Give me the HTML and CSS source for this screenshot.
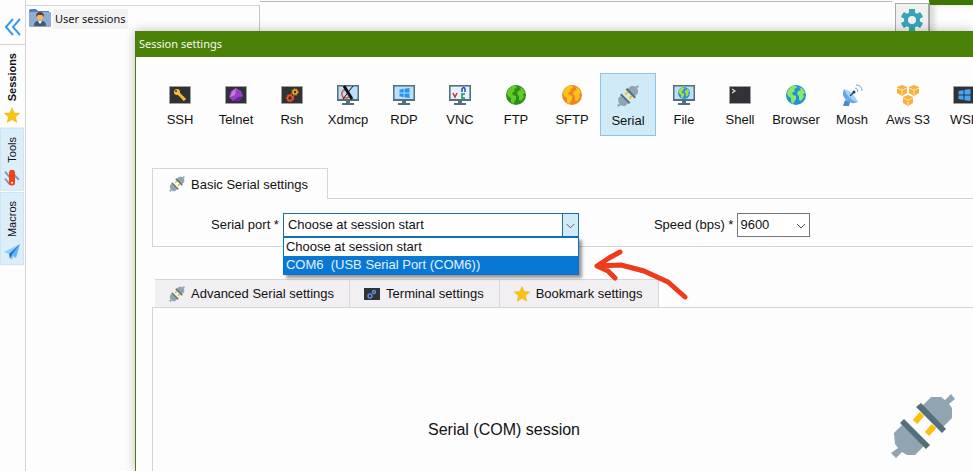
FILE: index.html
```html
<!DOCTYPE html>
<html lang="en">
  <head>
    <meta charset="UTF-8" />
    <meta name="viewport" content="width=device-width, initial-scale=1.0" />
    <title>Session settings</title>
    <link rel="stylesheet" href="styles.css">
  </head>
  <body>
    <!-- shared icons -->
    <svg class="sprite" aria-hidden="true">
      <symbol id="plug" viewBox="0 0 64 64">
        <path fill="#90a4b2" d="M31 12 40 3H50L54 6 60 0 64 5 58 10 61 14V24L52 33ZM11 31 3 39 4 50 7 54 0 59 5 64 11 58 16 61H24L33 52Z" />
        <path stroke="#fcc008" stroke-width="6" d="M31 20 24 28M43 32 36 40" />
        <path fill="#546e7a" d="M30 9 55 35 51 39 25 13ZM13 25 39 51 35 55 9 29Z" />
      </symbol>
      <symbol id="star" viewBox="0 0 16 16">
        <path fill="#f7c410" stroke="#e8b010" stroke-width=".5" d="M8 .5 10.2 5.6 15.7 6 11.5 9.7 12.8 15.2 8 12.3 3.2 15.2 4.5 9.7.3 6 5.8 5.6Z" />
      </symbol>
      <symbol id="screen" viewBox="0 0 22 20">
        <path fill="#546e7a" d="M0 0H22V16H13V18H17V20H5V18H9V16H0Z" />
        <path fill="#bbdefb" d="M1.5 1.5H20.5V14H1.5Z" />
      </symbol>
      <symbol id="box" viewBox="0 0 22 18">
        <path fill="#303236" stroke="#a0a0a0" d="M.5.5H21.5V17.5H.5Z" />
      </symbol>
      <symbol id="windows" viewBox="0 0 12 12">
        <path d="M0 2 5 1V5.5H0ZM6 .8 12 0V5.5H6ZM0 6.5H5V11L0 10ZM6 6.5H12V12L6 11.2Z" />
      </symbol>
      <symbol id="land" viewBox="0 0 20 20">
        <path d="M2 5 6 1 10 .5 11 3 8 4 9 6 6 8 7 10 10 11 10 14 7 19 5 17 5 13 2 11 1 8ZM13 2 17 4 19 8 17 9 18 12 15 16 13 15 13 11 11 9 12 6 15 5Z" />
      </symbol>
    </svg>

    <aside class="side">
      <button class="collapse" aria-label="Collapse">
        <svg width="16" height="18" viewBox="0 0 16 18"><path fill="none" stroke="#3f9bdc" stroke-width="2" d="M8 1 1 9 8 17M15 1 8 9 15 17" /></svg>
      </button>
      <button class="side-tab active"><svg class="icon"><use href="#star" /></svg>Sessions</button>
      <button class="side-tab">
        <svg class="icon" viewBox="0 0 16 16"><path stroke="#8f93b8" stroke-width="2" d="M1 2 6 8M10 5 15 10M1 9 6 15" /><rect x="5" y="0" width="6" height="16" rx="3" fill="#ee4416" /><circle cx="8" cy="13" r="1" fill="#fff" /></svg>Tools
      </button>
      <button class="side-tab">
        <svg class="icon" viewBox="0 0 16 16"><path fill="#90caf9" d="M16 0 0 8 5 10 8 16Z" /><path fill="#1976d2" d="M16 0 5 10 6 15 8 11Z" /><path fill="#64b5f6" d="M16 0 8 11 12 14Z" /></svg>Macros
      </button>
    </aside>

    <main class="workspace">
      <section class="tree">
        <svg width="22" height="18" viewBox="0 0 22 18"><path fill="#4d7fbd" d="M0 2Q0 0 2 0H7L9 2H20V6H0Z" /><rect y="3" width="22" height="15" rx="1" fill="#90acd4" /><path fill="#455a64" d="M5 17Q5 12 9 12H13Q17 12 17 17Z" /><path fill="#fff" d="M9 12H13L11 15Z" /><circle cx="11" cy="8" r="3" fill="#ffb74d" /><path fill="#5d4037" d="M7 8Q7 3 11 3T15 8L13 6H9Z" /></svg>
        <span class="tree-label">User sessions</span>
      </section>
      <section class="terminal"></section>
      <button class="gear" aria-label="Settings">
        <svg width="22" height="22" viewBox="-11 -11 22 22"><g fill="#36a3b8"><path id="tooth" d="M-3-11H3L2 11H-2Z" /><use href="#tooth" transform="rotate(60)" /><use href="#tooth" transform="rotate(120)" /><use href="#tooth" transform="rotate(180)" /><use href="#tooth" transform="rotate(240)" /><use href="#tooth" transform="rotate(300)" /><circle r="8" /></g><circle r="4" fill="#f0f0f0" /></svg>
      </button>
      <div class="behind"></div>
    </main>

    <section class="dialog" role="dialog" aria-labelledby="title">
      <h1 class="title" id="title">Session settings</h1>

      <nav class="types">
        <button class="type">
          <svg width="22" height="20" viewBox="0 0 22 20"><use href="#box" y="1" width="22" height="18" /><circle cx="8" cy="7" r="3" fill="#fbc02d" /><circle cx="7" cy="6" r="1" fill="#303236" /><path stroke="#fbc02d" stroke-width="3" d="M9 8 16 15" /><path stroke="#e09a20" stroke-width="1" d="M11 11 15 16" /></svg>SSH
        </button>
        <button class="type">
          <svg width="22" height="20" viewBox="0 0 22 20"><use href="#box" y="1" width="22" height="18" /><path fill="#9c3fc4" d="M11 3 16 6 18 11 14 16H8L4 12 6 6Z" /><path fill="#ca7be0" d="M11 3 7 7 5 12 10 10Z" /><path fill="#7120a0" d="M18 11 14 16H8L13 12Z" /></svg>Telnet
        </button>
        <button class="type">
          <svg width="22" height="20" viewBox="0 0 22 20"><use href="#box" y="1" width="22" height="18" /><g fill="none"><circle cx="9" cy="13" r="2.5" stroke="#f4511e" stroke-width="1.5" /><circle cx="9" cy="13" r="3.8" stroke="#f4511e" stroke-dasharray="2 1.5" /><circle cx="14" cy="7" r="2" stroke="#ffa726" stroke-width="1.5" /><circle cx="14" cy="7" r="3.2" stroke="#ffa726" stroke-dasharray="1.5 1.2" /></g></svg>Rsh
        </button>
        <button class="type">
          <svg width="22" height="20" viewBox="0 0 22 20"><use href="#screen" /><path fill="none" stroke="#e0583c" stroke-width="1.5" d="M10 4Q4 5 5 10T12 12" /><path stroke="#111" stroke-width="3" d="M7 1 15 14" /><path stroke="#111" d="M16 1 6 14" /></svg>Xdmcp
        </button>
        <button class="type">
          <svg width="22" height="20" viewBox="0 0 22 20"><use href="#screen" /><use href="#windows" x="6" y="3" width="11" height="10" fill="#2196f3" /></svg>RDP
        </button>
        <button class="type">
          <svg width="22" height="20" viewBox="0 0 22 20"><use href="#screen" /><path fill="#e3f2fd" d="M2 2H20V14H2Z" /><g fill="none" stroke-width="1.5"><path stroke="#d32f2f" d="M4 8 6 12 8 8" /><path stroke="#3040c0" d="M13 7V4Q15 1 16 4V7" /><path stroke="#159447" d="M16 9H13V13H16" /></g></svg>VNC
        </button>
        <button class="type">
          <svg width="20" height="20" viewBox="0 0 20 20"><circle cx="10" cy="10" r="10" fill="#2e8b20" /><use href="#land" fill="#62cc22" /></svg>FTP
        </button>
        <button class="type">
          <svg width="20" height="20" viewBox="0 0 20 20"><circle cx="10" cy="10" r="10" fill="#f58220" /><use href="#land" fill="#fbc51b" /></svg>SFTP
        </button>
        <button class="type selected">
          <svg width="22" height="22"><use href="#plug" /></svg>Serial
        </button>
        <button class="type">
          <svg width="22" height="20" viewBox="0 0 22 20"><use href="#screen" /><circle cx="11" cy="8" r="6" fill="#2196dc" /><use href="#land" x="5" y="2" width="12" height="12" fill="#b2d83c" /></svg>File
        </button>
        <button class="type">
          <svg width="22" height="20" viewBox="0 0 22 20"><use href="#box" y="1" width="22" height="18" /><path fill="none" stroke="#e0e0e0" stroke-width="1.2" d="M3 4 6 6 3 8" /></svg>Shell
        </button>
        <button class="type">
          <svg width="20" height="20" viewBox="0 0 20 20"><circle cx="10" cy="10" r="10" fill="#2190dc" /><use href="#land" fill="#8ce860" /></svg>Browser
        </button>
        <button class="type">
          <svg width="22" height="22" viewBox="0 0 22 22"><path fill="#64a9e4" d="M3 5Q0 11 5 16T17 18Z" /><path fill="#a6d4f8" d="M3 5Q11 6 17 18 8 17 3 5Z" /><path stroke="#1c4f80" stroke-width="1.5" d="M9 12 13 8" /><circle cx="13" cy="8" r="1.5" fill="#173f66" /><path fill="#4a8dcc" d="M4 16 2 22H8L9 18Z" /><path fill="none" stroke="#7aa7cc" d="M14 4Q17 4 17 8M15 1Q21 1 21 7" /></svg>Mosh
        </button>
        <button class="type">
          <svg width="24" height="22" viewBox="0 0 24 22"><g id="cube"><path fill="#f9b03c" d="M6 1 11 3V9L6 12 1 9V3Z" /><path fill="none" stroke="#fde3b4" d="M1 4 6 6 11 4M6 6V11" /></g><use href="#cube" x="12" /><use href="#cube" x="6" y="10" /></svg>Aws S3
        </button>
        <button class="type">
          <svg width="22" height="20" viewBox="0 0 22 20"><use href="#box" y="1" width="22" height="18" /><use href="#windows" x="5" y="4" width="13" height="12" fill="#42a5f5" /></svg>WSL
        </button>
      </nav>

      <div class="tabs">
        <button class="tab current"><svg class="icon"><use href="#plug" /></svg>Basic Serial settings</button>
      </div>
      <form class="basic">
        <label for="port">Serial port *</label>
        <div class="combo port">
          <select id="port"><option>Choose at session start</option><option>COM6  (USB Serial Port (COM6))</option></select>
          <svg class="arrow" width="16" height="22" viewBox="0 0 16 22"><path d="M4 10 8 14 12 10" /></svg>
          <ul class="list">
            <li>Choose at session start</li>
            <li class="picked">COM6&nbsp; (USB Serial Port (COM6))</li>
          </ul>
        </div>
        <label class="speed-label" for="speed">Speed (bps) *</label>
        <div class="combo speed">
          <select id="speed"><option>9600</option></select>
          <svg class="arrow" width="16" height="22" viewBox="0 0 16 22"><path d="M4 10 8 14 12 10" /></svg>
        </div>
      </form>

      <div class="tabs more">
        <button class="tab"><svg class="icon"><use href="#plug" /></svg>Advanced Serial settings</button>
        <button class="tab"><svg class="icon" viewBox="0 0 16 16"><path fill="#303236" d="M0 2H16V14H0Z" /><g fill="none" stroke="#5b8dd8" stroke-width="1.5"><circle cx="6" cy="10" r="2" /><circle cx="10" cy="6" r="1.5" /></g></svg>Terminal settings</button>
        <button class="tab"><svg class="icon"><use href="#star" /></svg>Bookmark settings</button>
      </div>
      <div class="summary">
        <p class="summary-text">Serial (COM) session</p>
        <svg width="64" height="64"><use href="#plug" /></svg>
      </div>
    </section>

    <!-- hand drawn pointer -->
    <svg class="pointer" width="100" height="54" viewBox="0 0 100 54" aria-hidden="true">
      <path d="M28 5 17 11 5 19 16 24 23 31M5 19 29 18 52 24 76 35 93 50" />
    </svg>
  </body>
</html>
```

FILE: styles.css
```css
* {
  box-sizing: border-box;
}
body {
  margin: 0;
  min-height: 100vh;
  display: flex;
  position: relative;
  overflow: hidden;
  background-color: #fdfdfd;
  color: #111;
  font-family: "Liberation Sans", Arial, sans-serif;
  font-size: 13px;
}
button,
select {
  font: inherit;
  color: inherit;
  border: none;
  border-radius: 0;
  background: none;
  padding: 0;
  margin: 0;
}
svg {
  flex: none;
}
.sprite {
  position: absolute;
  width: 0;
  height: 0;
}
.icon {
  width: 16px;
  height: 16px;
}

/* left strip */
.side {
  width: 26px;
  flex: none;
  padding-top: 4px;
  border-right: 1px solid #d4d4d4;
}
.collapse {
  display: flex;
  align-items: center;
  justify-content: center;
  width: 100%;
  height: 41px;
  padding-top: 6px;
  border-bottom: 1px solid #d4d4d4;
}
.side-tab {
  display: flex;
  align-items: center;
  gap: 7px;
  writing-mode: vertical-rl;
  transform: rotate(180deg);
  width: 24px;
  padding: 4px 0 8px;
  margin-bottom: 1px;
  font-size: 11px;
  background-color: #dceefa;
  border: 1px solid #cde4f2;
}
.side-tab .icon {
  transform: rotate(180deg);
}
.side-tab.active {
  gap: 6px;
  padding: 3px 0 7px;
  background: none;
  border-color: transparent;
  font-weight: bold;
}

/* main window behind the dialog */
.workspace {
  flex: 1;
  display: flex;
}
.tree {
  width: 234px;
  margin-top: 5px;
  padding: 3px;
  display: flex;
  align-items: flex-start;
  gap: 2px;
  border-top: 1px solid #d4d4d4;
  border-right: 1px solid #c4c4c4;
}
.tree-label {
  padding: 0 2px;
  background-color: #f3f2f3;
  font-family: "Noto Sans", sans-serif;
  font-size: 11px;
  line-height: 20px;
  white-space: nowrap;
}
.terminal {
  flex: 1;
  margin: 1px 3px 0 0;
  border-top: 1px solid #b8b8b8;
}
.gear {
  width: 34px;
  height: 36px;
  margin-top: 3px;
  border: 1px solid #aaa;
  background-color: #f0f0f0;
}
.behind {
  width: 44px;
  border-top: 5px solid #3f7304;
  border-left: 1px solid #999;
  box-shadow: inset 5px 0 5px #ddd;
}

/* dialog */
.dialog {
  position: absolute;
  top: 31px;
  left: 135px;
  right: 0;
  bottom: 0;
  display: flex;
  flex-direction: column;
  overflow: hidden;
  background-color: #fdfdfd;
  border-left: 1px solid #4a8005;
  box-shadow: 0 0 10px rgba(0, 0, 0, 0.25);
}
.title {
  flex: none;
  margin: 0;
  padding-left: 3px;
  background-color: #4a8208;
  color: #f4f8ee;
  font-family: "Noto Sans", sans-serif;
  font-size: 11px;
  font-weight: normal;
  line-height: 26px;
}
.types {
  display: flex;
  padding: 16px 0 32px 16px;
}
.type {
  flex: none;
  width: 56px;
  height: 63px;
  padding-top: 2px;
  display: flex;
  flex-direction: column;
  align-items: center;
  justify-content: center;
  gap: 6px;
  white-space: nowrap;
}
.type svg {
  height: 22px;
}
.type.selected {
  padding-top: 4px;
  background-color: #d0eaf8;
  border: 1px solid #90c4e4;
}
.tabs {
  display: flex;
  margin-left: 16px;
}
.tab {
  display: flex;
  align-items: center;
  gap: 6px;
  height: 28px;
  padding: 0 15px 0 14px;
  background-color: #f1eff1;
  border: 1px solid #d8d6d8;
  border-width: 1px 1px 0 0;
  white-space: nowrap;
}
.tab.current {
  height: 31px;
  margin-bottom: -1px;
  padding: 0 19px 0 16px;
  background-color: #fdfdfd;
  border-left-width: 1px;
  z-index: 1;
}
.basic {
  display: flex;
  align-items: center;
  height: 49px;
  margin-left: 16px;
  padding: 4px 0 0 58px;
  border: 1px solid #d4d4d4;
  border-right: none;
}
.combo {
  position: relative;
  height: 24px;
  margin-left: 4px;
}
.combo select {
  appearance: none;
  width: 100%;
  height: 100%;
  padding: 0 20px 0 4px;
  border: 1px solid #777;
  background-color: #fff;
}
.combo.speed select {
  padding-left: 2px;
}
.arrow {
  position: absolute;
  top: 1px;
  right: 1px;
  fill: none;
  stroke: #555;
  pointer-events: none;
}
.port {
  width: 296px;
}
.combo.port select {
  border-color: #1b6cab;
}
.port .arrow {
  background-color: #d0eaf8;
  border-left: 1px solid #1b6cab;
}
.speed {
  width: 73px;
}
.speed-label {
  margin-left: 75px;
}
.list {
  position: absolute;
  z-index: 2;
  top: 100%;
  left: 0;
  right: 0;
  margin: 0;
  padding: 0;
  list-style: none;
  line-height: 18px;
  background-color: #fff;
  border: 1px solid #0b72c4;
  box-shadow: 3px 3px 3px rgba(0, 0, 0, 0.4);
}
.list li {
  padding-left: 2px;
}
.list .picked {
  background-color: #0878d4;
  color: #e4f2fc;
}
.more {
  margin: 32px 0 0 19px;
}
.summary {
  flex: 1;
  display: grid;
  grid-template-columns: 1fr auto;
  gap: 36px;
  align-items: center;
  margin-left: 16px;
  padding: 72px 18px 0 0;
  border: 1px solid #d4d4d4;
  border-width: 1px 0 0 1px;
}
.summary-text {
  margin: 0;
  padding-top: 8px;
  font-size: 16px;
  text-align: center;
}
.pointer {
  position: absolute;
  top: 247px;
  left: 592px;
  fill: none;
  stroke: #ef3a1c;
  stroke-width: 5;
  stroke-linecap: round;
  stroke-linejoin: round;
}
```
